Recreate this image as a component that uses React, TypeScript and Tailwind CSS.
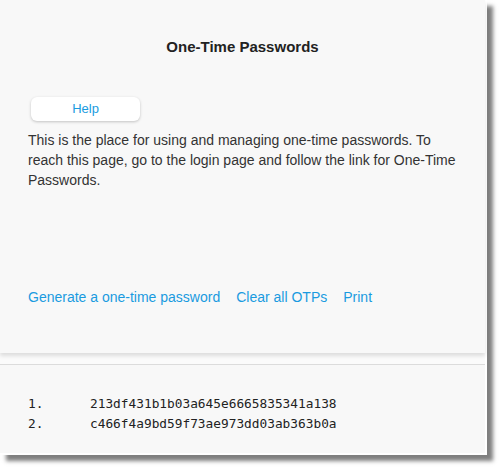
export default function App() {
  const otps = ['213df431b1b03a645e6665835341a138', 'c466f4a9bd59f73ae973dd03ab363b0a'];

  return (
    <div className="min-h-[469px] w-[500px] bg-white" style={{ fontFamily: '"Liberation Sans", Arial, sans-serif' }}>
      <div className="w-[487px] h-[455px] bg-white border-r-2 border-b-2 border-white shadow-[6px_6px_4px_rgba(0,0,0,0.5)] flex flex-col">
        {/* Top card */}
        <div className="bg-[#f8f8f8] pt-[37px] px-[28px] pb-[46px] shadow-[0_3px_4px_rgba(0,0,0,0.12)] relative z-10">
          <h1 className="text-center text-[15px] leading-[20px] font-bold text-[#222]">One-Time Passwords</h1>
          <button className="mt-[40px] ml-[3px] w-[109px] h-[24px] rounded-[6px] bg-white shadow-[0_1px_3px_rgba(0,0,0,0.22)] text-[13px] text-[#1a9be0]">
            Help
          </button>
          <p className="mt-[9px] text-[14px] leading-[20px] text-[#333]">
            This is the place for using and managing one-time passwords. To reach this page, go to the login page and follow the link for One-Time Passwords.
          </p>
          <div className="mt-[97px] flex gap-[16px] text-[14px] leading-[20px] text-[#1a9be0]">
            <a>Generate a one-time password</a>
            <a>Clear all OTPs</a>
            <a>Print</a>
          </div>
        </div>

        <div className="h-[11px] bg-[#fbfbfb]" />

        {/* OTP list */}
        <div className="flex-1 bg-[#f8f8f8] border-t border-[#dcdcdc] pt-[29px] px-[28px]" style={{ fontFamily: '"DejaVu Sans Mono", monospace' }}>
          {otps.map((otp, i) => (
            <div key={otp} className="flex text-[12.8px] leading-[20px] text-[#222]">
              <span className="w-[62px]">{i + 1}.</span>
              <span>{otp}</span>
            </div>
          ))}
        </div>
      </div>
    </div>
  );
}
